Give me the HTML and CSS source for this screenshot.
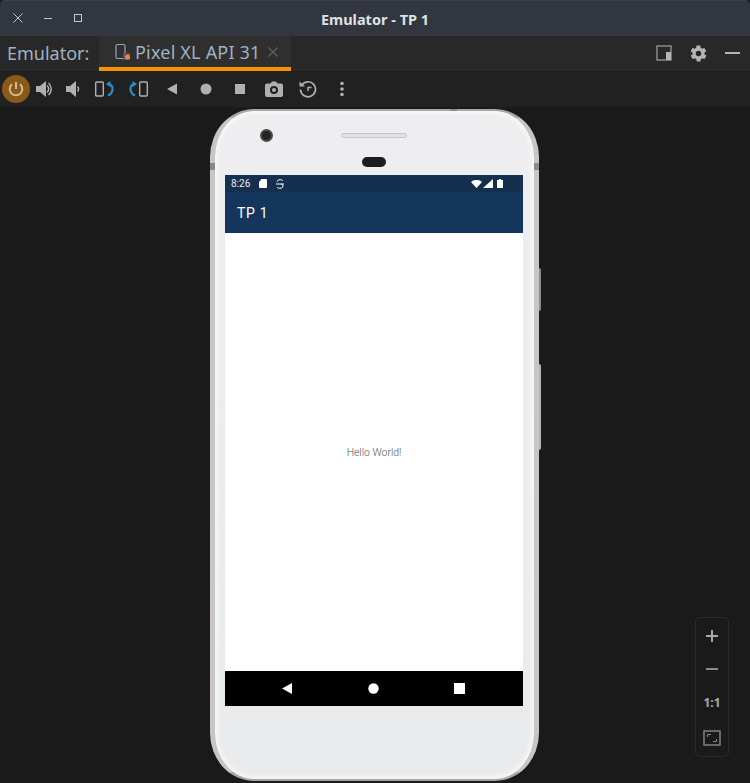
FILE: index.html
```html
<!DOCTYPE html>
<html lang="en">
<head>
  <meta charset="UTF-8" />
  <title>Emulator - TP 1</title>
  <link rel="stylesheet" href="styles.css">
</head>
<body>
  <header class="titlebar">
    <div class="win-btns">
      <svg width="12" height="12" viewBox="0 0 12 12"><path d="M1.500 1.500l9 9M10.500 1.500l-9 9" stroke="#c4c6ca" stroke-width="1" fill="none"/></svg>
      <svg width="12" height="12" viewBox="0 0 12 12"><path d="M2 6.500h8" stroke="#c4c6ca" stroke-width="1" fill="none"/></svg>
      <svg width="12" height="12" viewBox="0 0 12 12"><rect x="2.500" y="2.500" width="7" height="7" stroke="#c4c6ca" stroke-width="1" fill="none"/></svg>
    </div>
    <div class="win-title">Emulator - TP 1</div>
  </header>

  <div class="tabbar">
    <span class="tab-label">Emulator:</span>
    <div class="tab">
      <svg class="tab-icon" width="16" height="18" viewBox="0 0 16 18">
        <rect x="1" y="1.500" width="9" height="14" rx="1.500" stroke="#9aa4ad" stroke-width="1.200" fill="none"/>
        <rect x="8" y="10" width="7" height="7" fill="#5d4a86"/>
        <circle cx="12.500" cy="14" r="2.500" fill="#f28c0f"/>
      </svg>
      <span class="tab-name">Pixel XL API 31</span>
      <svg class="tab-close" width="10" height="10" viewBox="0 0 10 10"><path d="M.5.500l9 9M9.500.500l-9 9" stroke="#5f6163" stroke-width="1.200" fill="none"/></svg>
    </div>
    <div class="tab-actions">
      <svg width="16" height="16" viewBox="0 0 16 16"><rect x="1" y="1" width="14" height="14" stroke="#9a9a9a" stroke-width="1.300" fill="none"/><rect x="10" y="7" width="5" height="8" fill="#b4b4b4"/></svg>
      <svg width="19" height="19" viewBox="0 0 24 24"><path fill="#b4b4b4" d="M19.400 13c.1-.3.100-.7.100-1s0-.7-.1-1l2.100-1.600c.2-.2.200-.4.100-.6l-2-3.500c-.1-.2-.4-.3-.6-.2l-2.500 1c-.5-.4-1.100-.7-1.700-1l-.4-2.600c0-.3-.2-.5-.5-.5h-4c-.3 0-.5.200-.5.400l-.4 2.700c-.6.300-1.200.6-1.700 1l-2.500-1c-.2-.1-.5 0-.6.200l-2 3.500c-.1.200-.1.400.1.600L4.600 11c0 .3-.1.700-.1 1s0 .7.1 1l-2.100 1.600c-.2.200-.2.400-.1.600l2 3.500c.1.200.4.300.6.200l2.500-1c.5.400 1.100.7 1.700 1l.4 2.600c0 .3.200.5.500.5h4c.3 0 .5-.2.500-.4l.4-2.700c.6-.3 1.200-.6 1.700-1l2.500 1c.2.100.5 0 .6-.2l2-3.500c.1-.2.1-.4-.1-.6L19.400 13zM12 15.500a3.500 3.500 0 1 1 0-7 3.500 3.500 0 0 1 0 7z"/></svg>
      <svg width="16" height="16" viewBox="0 0 16 16"><rect x="0" y="7" width="15" height="2" fill="#b4b4b4"/></svg>
    </div>
  </div>

  <div class="toolbar">
    <button class="tool power">
      <svg width="18" height="18" viewBox="0 0 18 18"><path d="M9 2v7M5 4.200a6.300 6.300 0 1 0 8 0" stroke="#d9b98c" stroke-width="2" fill="none"/></svg>
    </button>
    <button class="tool tight">
      <svg width="17" height="16" viewBox="0 0 17 16"><path fill="#b0b0b0" d="M0 5h4l6-5v16l-6-5H0z"/><path d="M11 4.500a4.500 4.500 0 0 1 0 7M12.500 2a8 8 0 0 1 0 12" stroke="#b0b0b0" stroke-width="1.500" fill="none"/></svg>
    </button>
    <button class="tool tight">
      <svg width="14" height="16" viewBox="0 0 14 16"><path fill="#b0b0b0" d="M0 5h4l6-5v16l-6-5H0z"/><path d="M11.500 5.500a3.500 3.500 0 0 1 0 5" stroke="#b0b0b0" stroke-width="1.500" fill="none"/></svg>
    </button>
    <button class="tool">
      <svg width="19" height="16" viewBox="0 0 19 16"><rect x=".7" y="1" width="7.600" height="14" rx="1" stroke="#b0b0b0" stroke-width="1.400" fill="none"/><path d="M13.500 3c3 .4 4 2.400 4 5s-1.200 5-4.500 6.500" stroke="#2d8fc9" stroke-width="2.200" fill="none"/><path d="M11 3L15.500 0v6z" fill="#2d8fc9"/></svg>
    </button>
    <button class="tool">
      <svg width="19" height="16" viewBox="0 0 19 16"><rect x="10.700" y="1" width="7.600" height="14" rx="1" stroke="#b0b0b0" stroke-width="1.400" fill="none"/><path d="M5.500 3c-3 .4-4 2.400-4 5s1.200 5 4.500 6.500" stroke="#2d8fc9" stroke-width="2.200" fill="none"/><path d="M8 3L3.500 0v6z" fill="#2d8fc9"/></svg>
    </button>
    <button class="tool">
      <svg width="12" height="12" viewBox="0 0 12 12"><path fill="#b0b0b0" d="M1 6l10-5.500v11z"/></svg>
    </button>
    <button class="tool">
      <svg width="12" height="12" viewBox="0 0 12 12"><circle cx="6" cy="6" r="5.500" fill="#b0b0b0"/></svg>
    </button>
    <button class="tool">
      <svg width="12" height="12" viewBox="0 0 12 12"><rect x="1" y="1" width="10" height="10" fill="#b0b0b0"/></svg>
    </button>
    <button class="tool">
      <svg width="18" height="16" viewBox="0 0 18 16"><path fill="#b0b0b0" fill-rule="evenodd" d="M2 2.500h3.500L7 .5h4l1.500 2H16a2 2 0 0 1 2 2V14a2 2 0 0 1-2 2H2a2 2 0 0 1-2-2V4.500a2 2 0 0 1 2-2zM9 5a4 4 0 1 0 0 8 4 4 0 0 0 0-8zm0 2a2 2 0 1 1 0 4 2 2 0 0 1 0-4z"/></svg>
    </button>
    <button class="tool">
      <svg width="18" height="18" viewBox="0 0 18 18"><path d="M2.500 5.500A7.500 7.500 0 1 1 1.500 9.500" stroke="#b0b0b0" stroke-width="1.700" fill="none"/><path d="M.500 1.500l5.500 5H.500z" fill="#b0b0b0"/><path d="M9 11V7.500h3.500" stroke="#b0b0b0" stroke-width="1.500" fill="none"/></svg>
    </button>
    <button class="tool">
      <svg width="6" height="16" viewBox="0 0 6 16"><circle cx="3" cy="2.500" r="1.800" fill="#b0b0b0"/><circle cx="3" cy="8" r="1.800" fill="#b0b0b0"/><circle cx="3" cy="13.500" r="1.800" fill="#b0b0b0"/></svg>
    </button>
  </div>

  <main class="canvas">
    <div class="phone">
      <span class="side-btn side-power"></span>
      <span class="side-btn side-volume"></span>
      <span class="seam seam-top"></span>
      <span class="seam seam-left"></span>
      <span class="seam seam-right"></span>
      <div class="bezel-top">
        <span class="camera"></span>
        <span class="speaker"></span>
        <span class="sensor"></span>
      </div>
      <div class="screen">
        <div class="statusbar">
          <span class="clock">8:26</span>
          <svg width="8" height="9" viewBox="0 0 8 9"><path fill="#fff" d="M2.500 0H7a1 1 0 0 1 1 1v7a1 1 0 0 1-1 1H1a1 1 0 0 1-1-1V3z"/></svg>
          <svg class="status-s" width="8" height="10" viewBox="0 0 8 10"><path d="M7 2C6.500 1 5 .7 4 .7 2.500.7 1 1.500 1 2.700M1 8c.5 1 2 1.300 3 1.300 1.500 0 3-.8 3-2.300 0-1-.8-1.700-2-2M0 5h8" stroke="#fff" stroke-width="1" fill="none"/></svg>
          <div class="status-right">
            <svg width="11" height="8" viewBox="0 0 11 8"><path fill="#fff" d="M0 2a8 8 0 0 1 11 0L5.500 8z"/></svg>
            <svg class="status-signal" width="10" height="9" viewBox="0 0 10 9"><path fill="#fff" d="M10 0v9H0z"/></svg>
            <svg class="status-battery" width="6" height="9" viewBox="0 0 6 9"><path fill="#fff" d="M2 0h2v1h2v8H0V1h2z"/></svg>
          </div>
        </div>
        <div class="appbar">TP 1</div>
        <div class="content">Hello World!</div>
        <div class="navbar">
          <svg width="10" height="11" viewBox="0 0 10 11"><path fill="#fff" d="M0 5.500L10 0v11z"/></svg>
          <svg width="11" height="11" viewBox="0 0 11 11"><circle cx="5.500" cy="5.500" r="5.200" fill="#fff"/></svg>
          <svg width="11" height="11" viewBox="0 0 11 11"><rect width="11" height="11" fill="#fff"/></svg>
        </div>
      </div>
    </div>

    <div class="zoom-box">
      <svg width="14" height="14" viewBox="0 0 14 14"><path d="M7 1v12M1 7h12" stroke="#a8a8a8" stroke-width="2" fill="none"/></svg>
      <svg width="14" height="14" viewBox="0 0 14 14"><path d="M1 7h12" stroke="#8a8a8a" stroke-width="2" fill="none"/></svg>
      <span class="zoom-one">1:1</span>
      <svg width="18" height="16" viewBox="0 0 18 16"><rect x="1" y="1" width="16" height="14" stroke="#8a8a8a" stroke-width="1.400" fill="none"/><path d="M4.500 7V4.500H8M13.500 9v2.500H10" stroke="#8a8a8a" stroke-width="1" fill="none"/></svg>
    </div>
  </main>
</body>
</html>
```

FILE: styles.css
```css
* { box-sizing: border-box; }
html, body { height: 100%; }
body {
  margin: 0;
  height: 783px;
  overflow: hidden;
  display: flex;
  flex-direction: column;
  background: #1a1a1a;
  font-family: "Noto Sans", sans-serif;
}

/* window title */
.titlebar {
  position: relative;
  height: 36px;
  display: flex;
  align-items: center;
  justify-content: center;
  background: #31363f;
  border-top: 1px solid #3b4049;
  border-radius: 5px 5px 0 0;
}
.win-btns {
  position: absolute;
  left: 12px;
  top: 11px;
  display: flex;
  gap: 18px;
}
.win-title {
  font-size: 14.5px;
  font-weight: 700;
  color: #dfe1e4;
}

/* tabs */
.tabbar {
  height: 35px;
  display: flex;
  align-items: stretch;
  background: #282828;
}
.tab-label {
  width: 99px;
  padding-left: 7px;
  font-size: 18px;
  line-height: 34px;
  color: #9fb1c2;
}
.tab {
  width: 192px;
  display: flex;
  align-items: center;
  padding-left: 16px;
  background: #2f2f2f;
  border-bottom: 4px solid #f59300;
}
.tab-name {
  margin-left: 4px;
  font-size: 18px;
  letter-spacing: .2px;
  color: #9fb1c2;
  white-space: nowrap;
}
.tab-close { margin-left: 7px; }
.tab-actions {
  margin-left: auto;
  display: flex;
  align-items: center;
  gap: 17px;
  padding: 0 9px 1px 0;
}

/* toolbar */
.toolbar {
  height: 37px;
  display: flex;
  align-items: center;
  padding-left: 2px;
  background: #212121;
  border-bottom: 1px solid #1c1c1c;
}
.tool {
  flex: none;
  width: 34px;
  height: 28px;
  padding: 0;
  display: flex;
  align-items: center;
  justify-content: center;
  background: none;
  border: none;
}
.tight { width: 29px; }
.tight + .tight { width: 28px; }
.power {
  width: 28px;
  border-radius: 50%;
  background: #8a5a1c;
}

/* device */
.canvas {
  position: relative;
  flex: 1;
  padding: 1px 0 0 210px;
}
.phone {
  position: relative;
  width: 329px;
  height: 672px;
  display: flex;
  flex-direction: column;
  padding: 0 11px 73px 10px;
  background: linear-gradient(#eeeef0, #e9eaec);
  border-style: solid;
  border-width: 2px 5px;
  border-color: #aaa5a7 #c9c4c6;
  border-radius: 44px / 48px;
  box-shadow: inset 0 0 5px 2px #fafafb;
}
.side-btn {
  position: absolute;
  right: -7px;
  width: 2px;
  border-radius: 0 2px 2px 0;
}
.side-power { top: 157px; height: 43px; background: #8d8a8b; }
.side-volume { top: 253px; height: 86px; background: #b5b3b4; }
.seam {
  position: absolute;
  background: #8d888a;
}
.seam-top { top: -2px; left: 235px; width: 7px; height: 2px; }
.seam-left { top: 52px; left: -5px; width: 5px; height: 7px; }
.seam-right { top: 52px; right: -5px; width: 5px; height: 7px; }
.bezel-top {
  position: relative;
  height: 64px;
}
.camera {
  position: absolute;
  left: 35px;
  top: 18px;
  width: 13px;
  height: 13px;
  border-radius: 50%;
  background: #222;
  border: 2px solid #4c4c4c;
}
.speaker {
  position: absolute;
  left: 116px;
  top: 22px;
  width: 66px;
  height: 5px;
  border-radius: 3px;
  background: #e2e2e4;
  border: 1px solid #c6c6c8;
}
.sensor {
  position: absolute;
  left: 137px;
  top: 46px;
  width: 24px;
  height: 10px;
  border-radius: 5px;
  background: #1c1c1e;
}
.screen {
  flex: 1;
  display: flex;
  flex-direction: column;
  background: #fff;
}
.statusbar {
  height: 17px;
  display: flex;
  align-items: center;
  gap: 9px;
  padding: 0 20px 0 6px;
  background: #152f4e;
}
.clock {
  font-family: Roboto, sans-serif;
  font-size: 10px;
  color: #e8ebef;
}
.status-right {
  margin-left: auto;
  display: flex;
  align-items: center;
  gap: 1px;
}
.status-battery { margin-left: 3px; }
.appbar {
  height: 41px;
  padding: 0 12px;
  font-family: Roboto, sans-serif;
  font-size: 14px;
  font-weight: 400;
  letter-spacing: .7px;
  line-height: 43px;
  color: #fff;
  background: #14365c;
}
.content {
  flex: 1;
  display: flex;
  align-items: center;
  justify-content: center;
  font-family: Roboto, sans-serif;
  font-size: 10.4px;
  font-weight: 300;
  color: #555;
}
.navbar {
  height: 35px;
  display: flex;
  align-items: center;
  padding: 0 58px 0 57px;
  justify-content: space-between;
  background: #000;
}

/* zoom controls */
.zoom-box {
  position: absolute;
  left: 695px;
  top: 509px;
  width: 34px;
  height: 140px;
  display: flex;
  flex-direction: column;
  align-items: center;
  justify-content: space-between;
  padding: 11px 0 10px;
  border: 1px solid #2a2a2a;
  border-radius: 5px;
}
.zoom-one {
  font-size: 12px;
  font-weight: 700;
  color: #a8a8a8;
}
```
